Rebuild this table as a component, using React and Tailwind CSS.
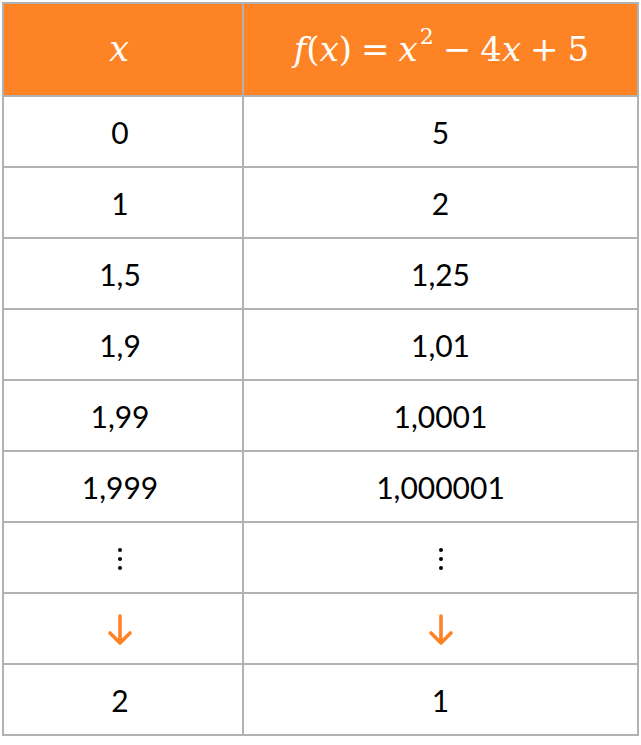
import React from "react";

const rows = [
  ["0", "5"],
  ["1", "2"],
  ["1,5", "1,25"],
  ["1,9", "1,01"],
  ["1,99", "1,0001"],
  ["1,999", "1,000001"],
  ["dots", "dots"],
  ["arrow", "arrow"],
  ["2", "1"],
];

function Arrow() {
  return (
    <svg width="26" height="34" viewBox="0 0 26 34" fill="none">
      <path
        d="M13 3 V30 M3 20 L13 30 L23 20"
        stroke="#FE8324"
        strokeWidth="3.6"
        strokeLinecap="round"
        strokeLinejoin="round"
      />
    </svg>
  );
}

function VDots() {
  return (
    <div className="flex flex-col items-center gap-[5px]">
      <span className="w-[4px] h-[4px] rounded-full bg-black" />
      <span className="w-[4px] h-[4px] rounded-full bg-black" />
      <span className="w-[4px] h-[4px] rounded-full bg-black" />
    </div>
  );
}

function Cell({ value }) {
  if (value === "dots") return <VDots />;
  if (value === "arrow") return <Arrow />;
  return <span>{value}</span>;
}

export default function App() {
  return (
    <div className="w-[641px] h-[745px] bg-white pl-[2px] pt-[2px]">
      <div
        className="grid grid-cols-[238px_393px] grid-rows-[91px_repeat(9,69px)] gap-[2px] p-[2px] bg-[#b2b2b2] w-fit text-[30px] text-black"
        style={{ fontFamily: "Lato, 'Open Sans', sans-serif" }}
      >
        <div
          className="bg-[#FE8324] flex items-center justify-center text-white text-[35px] pr-[8px]"
          style={{ fontFamily: "'DejaVu Serif', 'Liberation Serif', serif" }}
        >
          <i>x</i>
        </div>
        <div
          className="bg-[#FE8324] flex items-center justify-center text-white text-[34px] gap-[9px] pl-[2px]"
          style={{ fontFamily: "'DejaVu Serif', 'Liberation Serif', serif" }}
        >
          <span>
            <i>f</i>(<i>x</i>)
          </span>
          <span>=</span>
          <span className="flex items-start">
            <i>x</i>
            <span className="text-[22px] leading-none mt-[2px] ml-[2px]">2</span>
          </span>
          <span>−</span>
          <span>
            4<i>x</i>
          </span>
          <span>+</span>
          <span>5</span>
        </div>
        {rows.map(([a, b], i) => (
          <React.Fragment key={i}>
            <div className="bg-white flex items-center justify-center pr-[6px] pt-[2px]">
              <Cell value={a} />
            </div>
            <div className="bg-white flex items-center justify-center pt-[2px]">
              <Cell value={b} />
            </div>
          </React.Fragment>
        ))}
      </div>
    </div>
  );
}
